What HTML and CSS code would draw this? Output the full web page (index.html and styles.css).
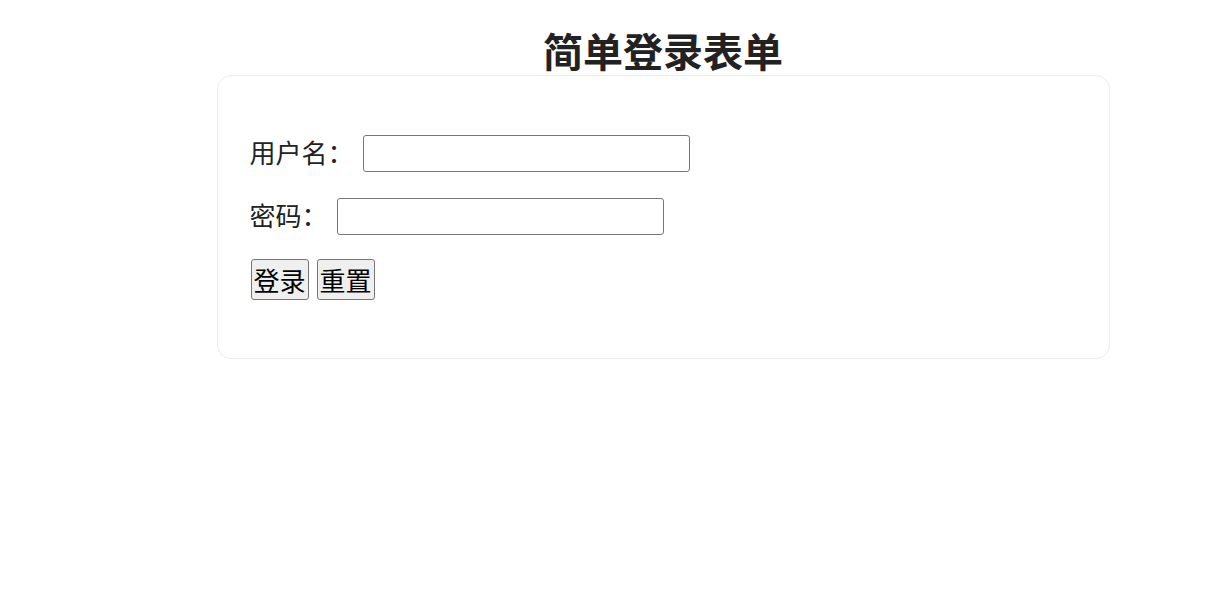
FILE: index.html
```html
<!DOCTYPE html>
<html lang="zh">
<head>
<meta charset="utf-8">
<title>简单登录表单</title>
<link rel="stylesheet" href="styles.css">
</head>
<body>
<div class="page">
  <h1 class="title">简单登录表单</h1>
  <form class="card">
    <div class="row">
      <label class="label" for="u">用户名：</label>
      <input class="field" id="u" type="text">
    </div>
    <div class="row">
      <label class="label" for="p">密码：</label>
      <input class="field" id="p" type="password">
    </div>
    <div class="actions">
      <button class="btn" type="button">登录</button>
      <button class="btn" type="reset">重置</button>
    </div>
  </form>
</div>
</body>
</html>
```

FILE: styles.css
```css
html, body {
  margin: 0;
  background: #ffffff;
}
body {
  font-family: "Noto Sans CJK SC", "Noto Sans", sans-serif;
  color: #222222;
}
.page {
  padding: 0 8px 0 104px;
}
.title {
  font-size: 40px;
  font-weight: 700;
  line-height: 48px;
  text-align: center;
  margin: 26px 0 1px;
  color: #222222;
}
.card {
  width: 893px;
  margin: 0 auto;
  box-sizing: border-box;
  border: 1px solid #ececec;
  border-radius: 14px;
  padding: 59px 32px 58px;
  display: flex;
  flex-direction: column;
  gap: 26px;
}
.row {
  display: flex;
  align-items: center;
  height: 37px;
}
.label {
  font-size: 26px;
  color: #222222;
  margin-right: 9px;
  margin-bottom: 4px;
}
.field {
  width: 327px;
  height: 37px;
  box-sizing: border-box;
  border: 1px solid #767676;
  border-radius: 3px;
  padding: 2px 6px;
  font-size: 16px;
  margin: 0;
}
.actions {
  display: flex;
  gap: 8px;
  margin-top: -2px;
  padding-left: 1px;
}
.btn {
  font-family: "Noto Sans CJK SC", sans-serif;
  font-size: 26px;
  line-height: 1;
  color: #000000;
  background: #efefef;
  border: 1px solid #767676;
  border-radius: 3px;
  height: 41px;
  width: 58px;
  padding: 0;
  margin: 0;
}
```
